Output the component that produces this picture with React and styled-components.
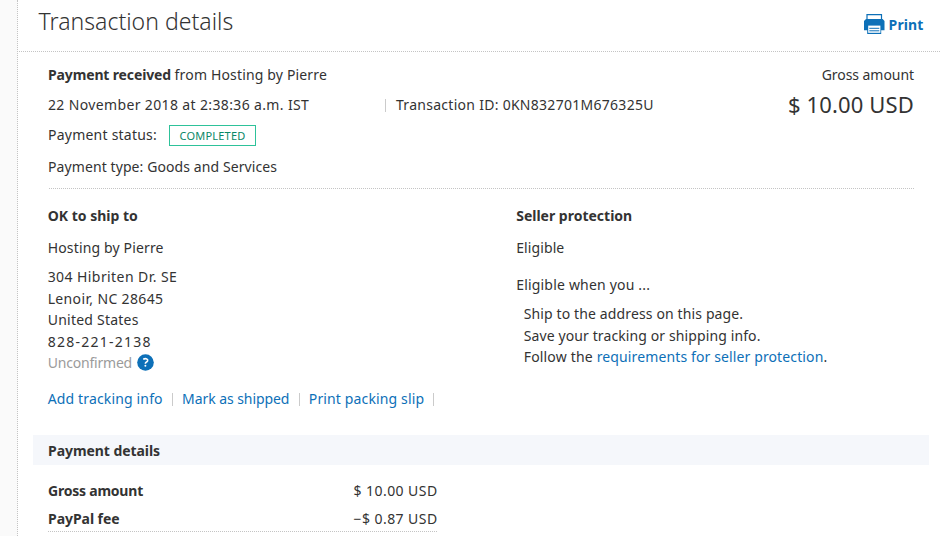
import React from "react";
import styled, { createGlobalStyle, css } from "styled-components";

const GlobalStyle = createGlobalStyle`
  * { box-sizing: border-box; }
  body {
    margin: 0;
    background: #fff;
    overflow: hidden;
  }
`;

const dotted = "1px dotted #c4c4c4";
const blue = "#0d70b8";

const Page = styled.div`
  display: flex;
  width: 941px;
  height: 536px;
  overflow: hidden;
  background: #fff;
  color: #333;
  font-family: "Noto Sans", sans-serif;
  font-size: 14px;
  line-height: 22px;
  white-space: nowrap;
`;

const Gutter = styled.aside`
  flex: none;
  width: 18px;
  background: #fafafa;
  border-right: ${dotted};
`;

const Panel = styled.main`
  flex: 1;
  min-width: 0;
`;

const Header = styled.header`
  display: flex;
  justify-content: space-between;
  height: 52px;
  margin: 0 1px;
  padding: 0 16.5px 0 19.5px;
  border-bottom: ${dotted};
`;

const Title = styled.h1`
  margin: 5px 0 0;
  font-size: 23px;
  font-weight: 300;
  line-height: 32px;
  letter-spacing: 0.02px;
`;

const link = css`
  color: ${blue};
  text-decoration: none;
`;

const PrintLink = styled.a`
  ${link}
  display: flex;
  gap: 4px;
  padding-top: 14px;
  height: 36px;
  font-weight: 700;
`;

const Text = styled.span`
  letter-spacing: ${(p) => p.$track || 0}px;
`;

const Strong = styled.strong`
  font-weight: 700;
  letter-spacing: ${(p) => p.$track || 0}px;
`;

const Link = styled.a`
  ${link}
  letter-spacing: ${(p) => p.$track || 0}px;
`;

const Summary = styled.section`
  display: flex;
  justify-content: space-between;
  height: 137px;
  margin: 0 27px 0 31px;
  padding-top: 12px;
  border-bottom: ${dotted};
`;

const SummaryLines = styled.div`
  display: flex;
  flex-direction: column;
  gap: 8px;
  margin-left: -1px;
`;

const DateLine = styled.div`
  display: grid;
  grid-template-columns: 337px auto;
`;

const IdCell = styled.div`
  display: flex;
  align-items: center;
  gap: 10px;
`;

const Bar = styled.i`
  flex: none;
  width: 1px;
  height: 13px;
  background: #cbcbcb;
`;

const StatusLine = styled.div`
  display: flex;
  gap: 12px;
  height: 24px;
`;

const Badge = styled.span`
  display: flex;
  align-items: center;
  justify-content: center;
  width: 87px;
  height: 21px;
  margin-top: 1px;
  border: 1px solid #2ec29a;
  color: #098767;
  font-size: 11px;
  letter-spacing: 0.2px;
`;

const Gross = styled.div`
  display: flex;
  flex-direction: column;
  align-items: flex-end;
`;

const GrossValue = styled.div`
  margin-top: 3px;
  font-size: 22px;
  line-height: 30px;
  letter-spacing: 0.14px;
`;

const Columns = styled.section`
  display: grid;
  grid-template-columns: 468.5px 1fr;
  height: 246px;
  padding: 16px 0 0 29.7px;
`;

const Column = styled.div`
  display: flex;
  flex-direction: column;
  align-items: flex-start;
`;

const Name = styled.p`
  margin: 10px 0 0;
  letter-spacing: ${(p) => p.$track || 0}px;
`;

const Condition = styled(Name)`
  margin-top: 15px;
`;

const Lines = styled.div`
  display: flex;
  flex-direction: column;
  margin: 7px 0 0 ${(p) => p.$indent || 0}px;
  line-height: 21.5px;
`;

const Unconfirmed = styled.div`
  display: flex;
  align-items: center;
  gap: 4.5px;
  color: #9b9b9b;

  svg {
    margin-top: -1px;
  }
`;

const Actions = styled.nav`
  display: flex;
  align-items: center;
  gap: 9.2px;
  margin-top: 14.5px;
`;

const Band = styled.h2`
  height: 30px;
  margin: 0 12px 0 15px;
  padding-left: 15px;
  background: #f5f7fb;
  font-size: 14px;
  line-height: 31px;
  letter-spacing: -0.06px;
`;

const Details = styled.section`
  display: flex;
  flex-direction: column;
  gap: 6px;
  width: 389px;
  height: 67px;
  margin-left: 30px;
  padding-top: 15px;
  border-bottom: ${dotted};
`;

const DetailRow = styled.div`
  display: flex;
  justify-content: space-between;
`;

const Amount = styled.span`
  margin-right: -0.6px;
  letter-spacing: 0.44px;
`;

const Printer = () => (
  <svg width="21" height="20" viewBox="0 0 21 20">
    <path d="M3 6V.6h14.5V6" fill="none" stroke={blue} strokeWidth="1.2" />
    <path d="M2 5h16.6L20.5 7v9.2H0V7z" fill={blue} />
    <path d="M3.2 11h14v9h-14z" fill={blue} />
    <path d="M4.2 11.6h12.2v7.2H4.2z" fill="#fff" />
    <path d="M5.3 14.3h10M5.3 16.8h10" stroke={blue} strokeWidth="1" />
  </svg>
);

const Help = () => (
  <svg width="17" height="17" viewBox="0 0 17 17">
    <circle cx="8.5" cy="8.5" r="8.3" fill={blue} />
    <path
      d="M6.2 5.2q2-.9 3.5-.3 1.4.7.9 2-.4.8-1.6 1.5-.6.4-.6 1.3"
      fill="none"
      stroke="#fff"
      strokeWidth="1.6"
    />
    <circle cx="8.4" cy="11.7" r="1" fill="#fff" />
  </svg>
);

export default function App() {
  return (
    <>
      <GlobalStyle />
      <Page>
        <Gutter />
        <Panel>
          <Header>
            <Title>Transaction details</Title>
            <PrintLink>
              <Printer />
              <Text $track={0.12}>Print</Text>
            </PrintLink>
          </Header>

          <Summary>
            <SummaryLines>
              <div>
                <Strong $track={-0.14}>Payment received</Strong>{" "}
                <Text $track={0.16}>from Hosting by Pierre</Text>
              </div>
              <DateLine>
                <Text $track={0.36}>22 November 2018 at 2:38:36 a.m. IST</Text>
                <IdCell>
                  <Bar />
                  <Text $track={0.28}>Transaction ID: 0KN832701M676325U</Text>
                </IdCell>
              </DateLine>
              <StatusLine>
                <Text $track={0.23}>Payment status:</Text>
                <Badge>COMPLETED</Badge>
              </StatusLine>
              <Text $track={0.09}>Payment type: Goods and Services</Text>
            </SummaryLines>
            <Gross>
              <Text $track={-0.06}>Gross amount</Text>
              <GrossValue>$ 10.00 USD</GrossValue>
            </Gross>
          </Summary>

          <Columns>
            <Column>
              <Strong>OK to ship to</Strong>
              <Name $track={0.15}>Hosting by Pierre</Name>
              <Lines>
                <Text $track={0.42}>304 Hibriten Dr. SE</Text>
                <Text $track={0.35}>Lenoir, NC 28645</Text>
                <Text $track={0.23}>United States</Text>
                <Text $track={1.24}>828-221-2138</Text>
                <Unconfirmed>
                  <Text $track={-0.2}>Unconfirmed</Text>
                  <Help />
                </Unconfirmed>
              </Lines>
              <Actions>
                <Link $track={0.15}>Add tracking info</Link>
                <Bar />
                <Link $track={-0.07}>Mark as shipped</Link>
                <Bar />
                <Link $track={0.14}>Print packing slip</Link>
                <Bar />
              </Actions>
            </Column>
            <Column>
              <Strong>Seller protection</Strong>
              <Name $track={0.1}>Eligible</Name>
              <Condition $track={0.19}>Eligible when you ...</Condition>
              <Lines $indent={7.5}>
                <Text $track={0.13}>Ship to the address on this page.</Text>
                <Text $track={0.11}>Save your tracking or shipping info.</Text>
                <Text $track={0.18}>
                  Follow the <Link $track={0.12}>requirements for seller protection</Link>.
                </Text>
              </Lines>
            </Column>
          </Columns>

          <Band>Payment details</Band>
          <Details>
            <DetailRow>
              <Strong $track={-0.22}>Gross amount</Strong>
              <Amount>$ 10.00 USD</Amount>
            </DetailRow>
            <DetailRow>
              <Strong $track={-0.05}>PayPal fee</Strong>
              <Amount>−$ 0.87 USD</Amount>
            </DetailRow>
          </Details>
        </Panel>
      </Page>
    </>
  );
}
